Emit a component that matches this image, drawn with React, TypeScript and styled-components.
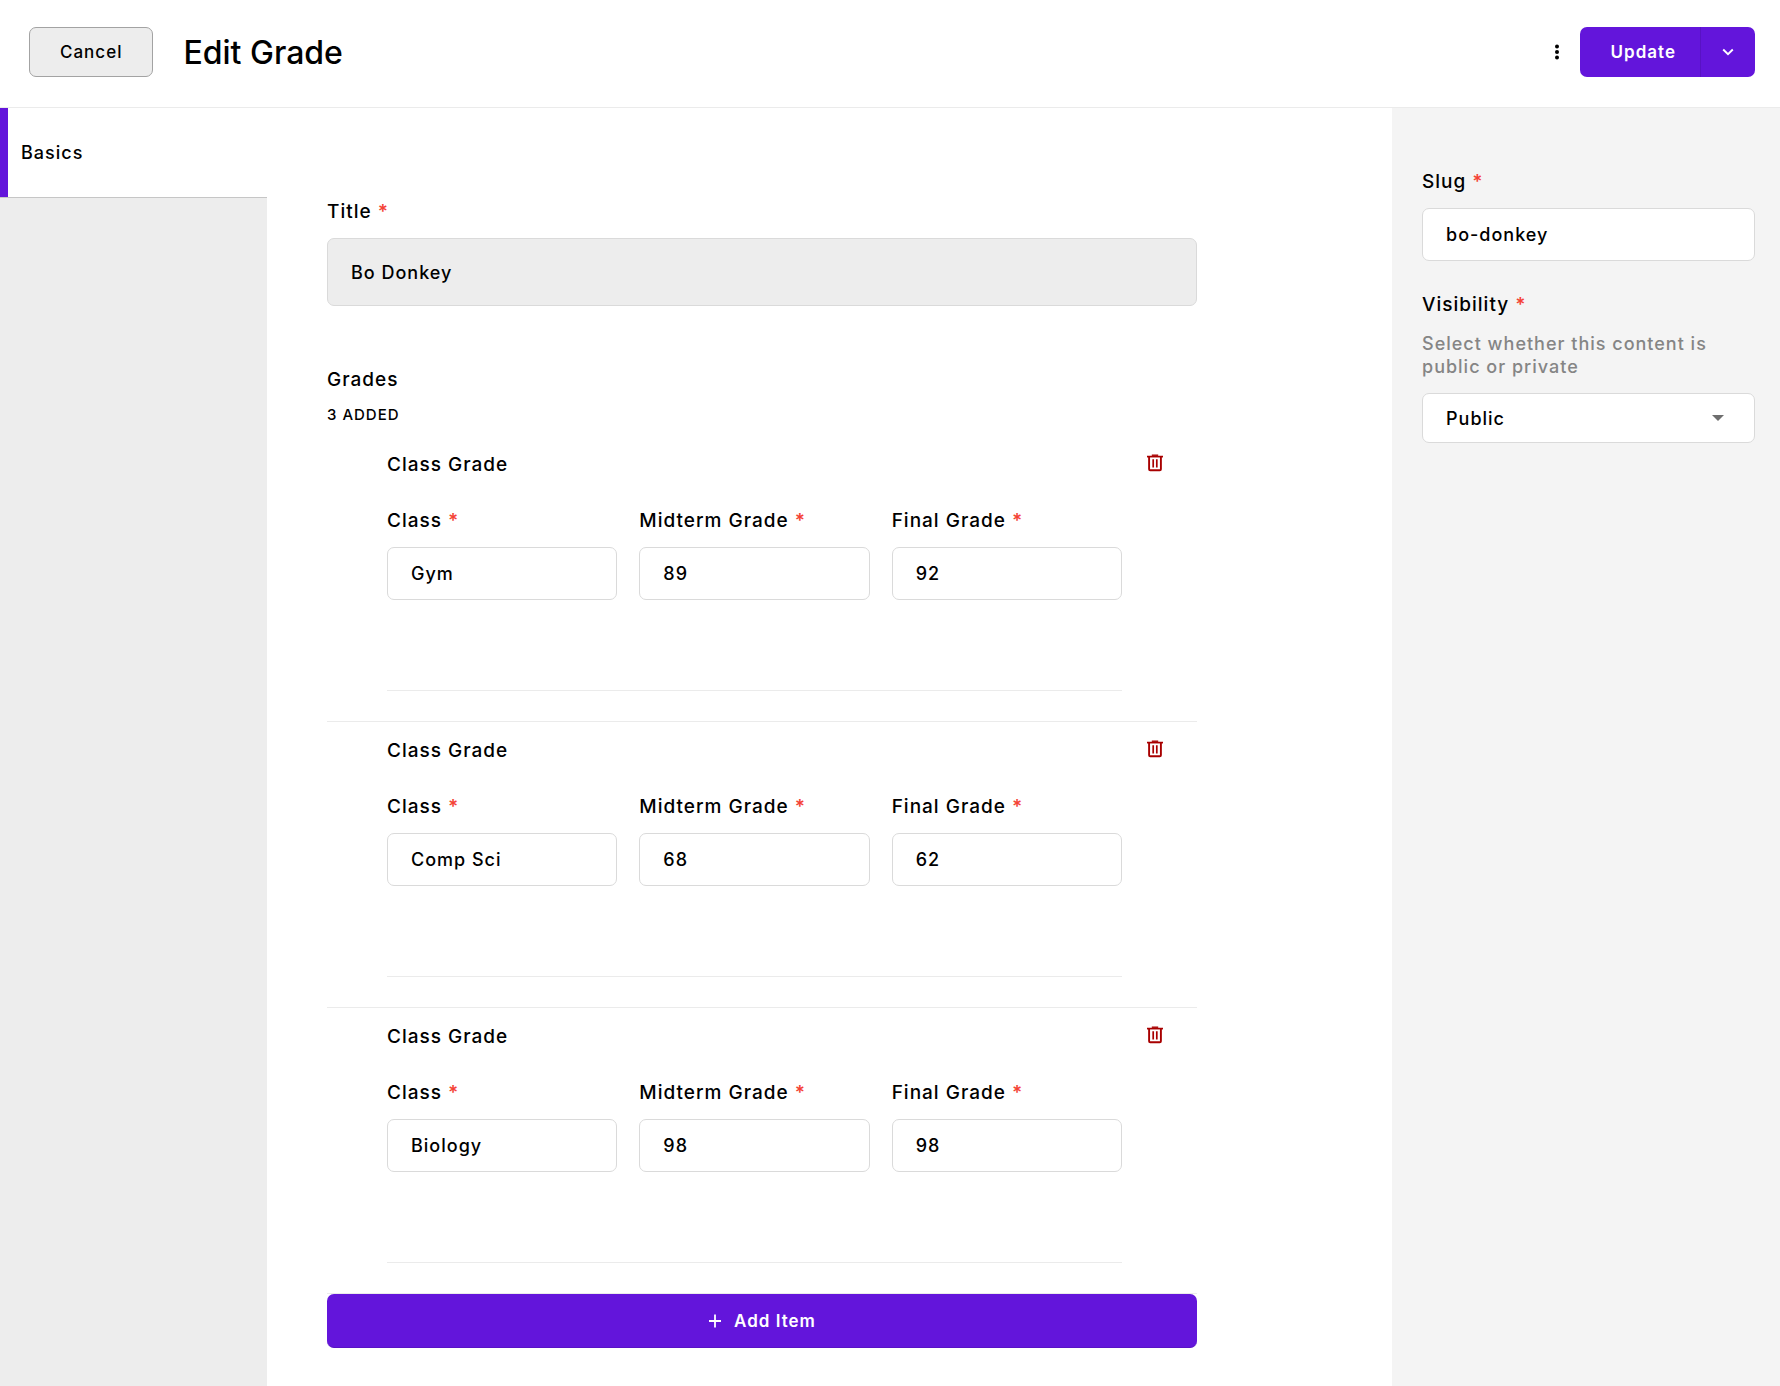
import React, { useState } from 'react';
import styled, { createGlobalStyle } from 'styled-components';

const purple = '#6315db';

const GlobalStyle = createGlobalStyle`
  *, *::before, *::after { box-sizing: border-box; }
  body {
    margin: 0;
    background: #fff;
    color: #000;
    font-family: Inter, "Liberation Sans", sans-serif;
    font-size: 18px;
    font-weight: 500;
    letter-spacing: 1px;
    -webkit-font-smoothing: antialiased;
  }
  button, input, select { font: inherit; letter-spacing: inherit; color: inherit; }
  button { cursor: pointer; }
  svg { display: block; }
`;

const Page = styled.div`
  display: flex;
  flex-direction: column;
  min-height: 100vh;
`;

const Header = styled.header`
  display: flex;
  align-items: center;
  gap: 30px;
  padding: 27px 25px 30px 29px;
  border-bottom: 1px solid #ebebeb;
`;

const CancelButton = styled.button`
  height: 50px;
  padding: 0 30px;
  border: 1px solid #a3a3a3;
  border-radius: 7px;
  background: #ededed;
  font-size: 17px;
`;

const PageTitle = styled.h1`
  margin: 0;
  padding-top: 2px;
  flex: 1;
  font-size: 32px;
  line-height: 40px;
  font-weight: 500;
  letter-spacing: 0;
`;

const Actions = styled.div`
  display: flex;
  align-items: center;
  gap: 11px;
`;

const IconButton = styled.button`
  display: grid;
  place-items: center;
  width: 24px;
  height: 24px;
  padding: 0;
  border: 0;
  background: none;
`;

const SplitButton = styled.div`
  display: flex;
  height: 50px;
  border-radius: 7px;
  overflow: hidden;
  background: ${purple};
  color: #fff;
`;

const UpdateButton = styled.button`
  padding: 0 24px 0 31px;
  border: 0;
  border-right: 1px solid #5812c4;
  background: none;
  font-size: 17px;
  font-weight: 600;
`;

const MoreButton = styled.button`
  display: grid;
  place-items: center;
  width: 54px;
  padding: 0;
  border: 0;
  background: none;
`;

const Body = styled.div`
  display: grid;
  grid-template-columns: 267px minmax(0, 1fr) 388px;
  flex: 1;
`;

const Tabs = styled.nav`
  background: #ededed;
`;

const Tab = styled.a`
  display: flex;
  align-items: center;
  height: 90px;
  padding-left: 21px;
  border-bottom: 1px solid #c6c6c6;
  background: #fff;
  box-shadow: inset 8px 0 ${purple};
  color: #000;
  text-decoration: none;
`;

const Main = styled.main`
  padding: 91px 60px 30px;
`;

const Form = styled.form`
  display: flex;
  flex-direction: column;
  gap: 61px;
  max-width: 870px;
`;

const Aside = styled.aside`
  display: flex;
  flex-direction: column;
  gap: 31px;
  padding: 61px 25px 30px 30px;
  background: #f4f4f4;
`;

const FieldBox = styled.div`
  display: flex;
  flex-direction: column;
  gap: 13px;
  min-width: 0;
`;

const Label = styled.label`
  font-size: 19px;
  line-height: 26px;
`;

const Required = styled.span`
  color: #f44336;
  font-weight: 600;
`;

const TextInput = styled.input<{ $large?: boolean }>`
  width: 100%;
  height: ${p => (p.$large ? 68 : 53)}px;
  padding: 0 23px;
  border: 1px solid #dadada;
  border-radius: 7px;
  background: ${p => (p.$large ? '#ededed' : '#fff')};
`;

const Hint = styled.p`
  margin: 1px 0 2px;
  color: #858585;
  line-height: 23px;
`;

const SelectWrap = styled.div`
  display: grid;
  align-items: center;
  > * { grid-area: 1 / 1; }
  > svg { justify-self: end; margin-right: 31px; pointer-events: none; }
`;

const Select = styled.select`
  width: 100%;
  height: 50px;
  padding: 0 23px;
  border: 1px solid #dadada;
  border-radius: 7px;
  background: #fff;
  appearance: none;
`;

const Group = styled.section`
  display: flex;
  flex-direction: column;
`;

const GroupTitle = styled.h2`
  margin: 0;
  font-size: 19px;
  line-height: 26px;
  font-weight: 500;
`;

const Count = styled.p`
  margin: 12px 0 11px;
  font-size: 15px;
  line-height: 20px;
  text-transform: uppercase;
`;

const Item = styled.article`
  display: grid;
  grid-template-columns: minmax(0, 1fr) 75px;
  padding: 16px 0 30px 60px;
  border-bottom: 1px solid #ebebeb;
`;

const ItemBody = styled.div`
  display: flex;
  flex-direction: column;
  gap: 30px;
  padding-bottom: 90px;
  border-bottom: 1px solid #ebebeb;
`;

const ItemFields = styled.div`
  display: grid;
  grid-template-columns: repeat(3, minmax(0, 1fr));
  gap: 22px;
`;

const DeleteSlot = styled.div`
  display: flex;
  align-items: center;
  justify-content: flex-end;
  height: 22px;
  padding-right: 30px;
`;

const AddButton = styled.button`
  display: flex;
  align-items: center;
  justify-content: center;
  gap: 12px;
  height: 54px;
  border: 0;
  border-bottom: 1px solid #5812c4;
  border-radius: 7px;
  background: ${purple};
  color: #fff;
  font-size: 17px;
  font-weight: 600;
`;

const DotsIcon = () => (
  <svg width="6" height="16" viewBox="0 0 6 16" aria-hidden="true">
    <circle cx="3" cy="2.5" r="2" />
    <circle cx="3" cy="8" r="2" />
    <circle cx="3" cy="13.5" r="2" />
  </svg>
);

const ChevronIcon = () => (
  <svg width="12" height="8" viewBox="0 0 12 8" fill="none" stroke="#fff" strokeWidth="1.9" aria-hidden="true">
    <path d="M1.2 1.5 6 6.1l4.8-4.6" />
  </svg>
);

const CaretIcon = () => (
  <svg width="12" height="6" viewBox="0 0 12 6" aria-hidden="true">
    <path d="M0 0h12L6 6z" fill="#6e6e6e" />
  </svg>
);

const PlusIcon = () => (
  <svg width="14" height="14" viewBox="0 0 14 14" stroke="#fff" strokeWidth="1.8" aria-hidden="true">
    <path d="M7 .5v13M1 7h12" />
  </svg>
);

const TrashIcon = () => (
  <svg width="16" height="18" viewBox="0 0 16 18" fill="none" stroke="#a80000" aria-hidden="true">
    <path d="M4.8 1.2h6.4" strokeWidth="1.4" />
    <path d="M0 2.6h16" strokeWidth="1.7" />
    <path d="M2.1 3v12.2c0 .8.4 1.1 1.1 1.1h9.6c.7 0 1.1-.3 1.1-1.1V3" strokeWidth="1.9" />
    <path d="M6.2 5.2v8.4M9.8 5.2v8.4" strokeWidth="1.7" />
  </svg>
);

interface FieldProps {
  id: string;
  label: string;
  initial: string;
  large?: boolean;
}

function Field({ id, label, initial, large }: FieldProps) {
  const [value, setValue] = useState(initial);
  return (
    <FieldBox>
      <Label htmlFor={id}>
        {label} <Required>*</Required>
      </Label>
      <TextInput id={id} $large={large} value={value} onChange={e => setValue(e.target.value)} />
    </FieldBox>
  );
}

const grades = [
  { name: 'Gym', midterm: '89', final: '92' },
  { name: 'Comp Sci', midterm: '68', final: '62' },
  { name: 'Biology', midterm: '98', final: '98' },
];

export default function App() {
  return (
    <Page>
      <GlobalStyle />
      <Header>
        <CancelButton type="button">Cancel</CancelButton>
        <PageTitle>Edit Grade</PageTitle>
        <Actions>
          <IconButton type="button" aria-label="More options">
            <DotsIcon />
          </IconButton>
          <SplitButton>
            <UpdateButton type="button">Update</UpdateButton>
            <MoreButton type="button" aria-label="Update options">
              <ChevronIcon />
            </MoreButton>
          </SplitButton>
        </Actions>
      </Header>
      <Body>
        <Tabs>
          <Tab href="#basics">Basics</Tab>
        </Tabs>
        <Main id="basics">
          <Form onSubmit={e => e.preventDefault()}>
            <Field id="title" label="Title" initial="Bo Donkey" large />
            <Group>
              <GroupTitle>Grades</GroupTitle>
              <Count>{grades.length} added</Count>
              {grades.map((g, i) => (
                <Item key={g.name}>
                  <ItemBody>
                    <GroupTitle as="h3">Class Grade</GroupTitle>
                    <ItemFields>
                      <Field id={`class-${i}`} label="Class" initial={g.name} />
                      <Field id={`midterm-${i}`} label="Midterm Grade" initial={g.midterm} />
                      <Field id={`final-${i}`} label="Final Grade" initial={g.final} />
                    </ItemFields>
                  </ItemBody>
                  <DeleteSlot>
                    <IconButton type="button" aria-label={`Delete ${g.name}`}>
                      <TrashIcon />
                    </IconButton>
                  </DeleteSlot>
                </Item>
              ))}
              <AddButton type="button">
                <PlusIcon />
                Add Item
              </AddButton>
            </Group>
          </Form>
        </Main>
        <Aside>
          <Field id="slug" label="Slug" initial="bo-donkey" />
          <FieldBox>
            <Label htmlFor="visibility">
              Visibility <Required>*</Required>
            </Label>
            <Hint>Select whether this content is public or private</Hint>
            <SelectWrap>
              <Select id="visibility" defaultValue="Public">
                <option>Public</option>
                <option>Private</option>
              </Select>
              <CaretIcon />
            </SelectWrap>
          </FieldBox>
        </Aside>
      </Body>
    </Page>
  );
}
